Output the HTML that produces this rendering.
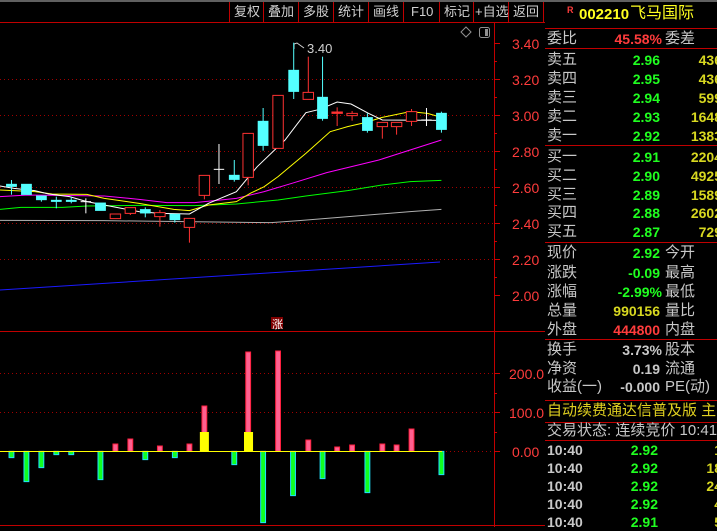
<!DOCTYPE html>
<html><head><meta charset="utf-8"><style>
*{margin:0;padding:0;box-sizing:border-box}
body{width:717px;height:527px;background:#000;overflow:hidden;position:relative;font-family:"Liberation Sans","Noto Sans CJK SC",sans-serif;}
.t{position:absolute;white-space:nowrap;font-size:15px;line-height:18px;color:#c8c8c8}
.v{position:absolute;white-space:nowrap;font-size:14px;line-height:18px;font-weight:bold;text-align:right}
.g{color:#20ff20}.y{color:#d8d820}.r{color:#ff3c3c}.w{color:#c8c8c8}
.hl{position:absolute;left:545px;width:172px;height:1px;background:#c00000}
.tb{position:absolute;top:3px;font-size:13px;color:#d0d0d0;line-height:18px}
.sep{position:absolute;top:2px;width:1px;height:20px;background:#c00000}
</style></head><body>
<div style="position:absolute;left:0;top:0;width:717px;height:2px;background:#606060"></div>
<div style="position:absolute;left:0;top:22px;width:545px;height:1px;background:#c00000"></div>
<div class="sep" style="left:229px"></div><div class="sep" style="left:263px"></div><div class="sep" style="left:298px"></div><div class="sep" style="left:333px"></div><div class="sep" style="left:368px"></div><div class="sep" style="left:403px"></div><div class="sep" style="left:439px"></div><div class="sep" style="left:473px"></div><div class="sep" style="left:508px"></div><div class="sep" style="left:543px"></div>
<div class="tb" style="left:234px">复权</div><div class="tb" style="left:268px">叠加</div><div class="tb" style="left:303px">多股</div><div class="tb" style="left:338px">统计</div><div class="tb" style="left:373px">画线</div><div class="tb" style="left:411px">F10</div><div class="tb" style="left:444px">标记</div><div class="tb" style="left:475px">+自选</div><div class="tb" style="left:513px">返回</div>

<svg width="545" height="527" style="position:absolute;left:0;top:0">
<line x1="494.5" y1="23" x2="494.5" y2="527" stroke="#c00000"/>
<line x1="545.5" y1="0" x2="545.5" y2="527" stroke="#c00000"/>
<line x1="0" y1="331.5" x2="545" y2="331.5" stroke="#c00000"/>
<line x1="0" y1="525.5" x2="545" y2="525.5" stroke="#c00000"/>
<g stroke="#a00000" stroke-dasharray="1,3">
<line x1="0" y1="79.5" x2="494" y2="79.5"/><line x1="0" y1="115.5" x2="494" y2="115.5"/><line x1="0" y1="151.5" x2="494" y2="151.5"/><line x1="0" y1="187.5" x2="494" y2="187.5"/><line x1="0" y1="223.5" x2="494" y2="223.5"/><line x1="0" y1="259.5" x2="494" y2="259.5"/>
<line x1="0" y1="373.5" x2="494" y2="373.5"/><line x1="0" y1="412.5" x2="494" y2="412.5"/><line x1="442" y1="451.5" x2="494" y2="451.5"/>
</g>
<g stroke="#d00000">
<line x1="494" y1="43.5" x2="500" y2="43.5"/><line x1="494" y1="61.5" x2="497" y2="61.5"/><line x1="494" y1="79.5" x2="500" y2="79.5"/><line x1="494" y1="97.5" x2="497" y2="97.5"/><line x1="494" y1="115.5" x2="500" y2="115.5"/><line x1="494" y1="133.5" x2="497" y2="133.5"/><line x1="494" y1="151.5" x2="500" y2="151.5"/><line x1="494" y1="169.5" x2="497" y2="169.5"/><line x1="494" y1="187.5" x2="500" y2="187.5"/><line x1="494" y1="205.5" x2="497" y2="205.5"/><line x1="494" y1="223.5" x2="500" y2="223.5"/><line x1="494" y1="241.5" x2="497" y2="241.5"/><line x1="494" y1="259.5" x2="500" y2="259.5"/><line x1="494" y1="277.5" x2="497" y2="277.5"/><line x1="494" y1="295.5" x2="500" y2="295.5"/>
<line x1="494" y1="373.5" x2="500" y2="373.5"/><line x1="494" y1="393.5" x2="497" y2="393.5"/><line x1="494" y1="412.5" x2="500" y2="412.5"/><line x1="494" y1="432.5" x2="497" y2="432.5"/><line x1="494" y1="451.5" x2="500" y2="451.5"/>
</g>
<g fill="#ff3c3c" font-size="14" font-family="Liberation Sans,sans-serif">
<text x="512" y="49">3.40</text><text x="512" y="85">3.20</text><text x="512" y="121">3.00</text><text x="512" y="157">2.80</text><text x="512" y="193">2.60</text><text x="512" y="229">2.40</text><text x="512" y="265">2.20</text><text x="512" y="301">2.00</text>
<text x="509" y="379">200.0</text><text x="509" y="418">100.0</text><text x="512" y="457">0.00</text>
</g>
<path d="M466 27 L471 32 L466 37 L461 32 Z" fill="none" stroke="#909090"/>
<rect x="479.5" y="27.5" width="10" height="10" rx="2" fill="none" stroke="#909090"/><rect x="485" y="29" width="3" height="7" fill="#909090"/>
<text x="307" y="53" fill="#d0d0d0" font-size="13" font-family="Liberation Sans,sans-serif">3.40</text>
<path d="M294 44 L294 49 M294 44 L297 43 L304 48" stroke="#d0d0d0" fill="none"/>
<rect x="271" y="317" width="12" height="12" fill="#800000"/><text x="272" y="328" fill="#fff" font-size="11" font-family="Noto Sans CJK SC,sans-serif">涨</text>
<line x1="0" y1="290" x2="440" y2="262" stroke="#1a1aff"/>

<g transform="translate(0,30) scale(0.34758,0.33333)">
<g fill="none" stroke-width="1" vector-effect="non-scaling-stroke">
<polyline vector-effect="non-scaling-stroke" stroke="#b0b0b0" points="0,571 300,572 780,578 860,572 940,565 1060,555 1180,545 1270,538"/>
<polyline vector-effect="non-scaling-stroke" stroke="#00ff00" points="0,538 60,532 180,532 250,528 400,526 560,527 680,522 800,510 880,498 1000,482 1100,465 1180,455 1270,451"/>
<polyline vector-effect="non-scaling-stroke" stroke="#ff00ff" points="0,500 80,495 300,498 400,508 480,518 560,518 680,505 760,485 840,460 940,428 1090,390 1180,360 1270,330"/>
<polyline vector-effect="non-scaling-stroke" stroke="#ffff00" points="0,480 100,485 150,492 250,493 300,505 400,520 500,538 545,542 600,525 680,515 720,490 760,470 800,440 880,370 950,305 1000,290 1050,278 1100,262 1180,245 1230,250 1270,262"/>
<polyline vector-effect="non-scaling-stroke" stroke="#ffffff" points="0,468 40,475 100,482 140,492 200,500 250,515 300,525 350,535 400,545 460,550 545,552 600,520 680,485 740,410 820,330 880,248 920,238 970,216 1010,222 1060,250 1100,270 1270,271"/>
</g>
<g stroke="#54ffff" fill="#54ffff">
<line x1="33" y1="450" x2="33" y2="494" vector-effect="non-scaling-stroke"/><rect x="18" y="462" width="30" height="8"/>
<rect x="61" y="462" width="30" height="32"/>
<line x1="119" y1="497" x2="119" y2="515" vector-effect="non-scaling-stroke"/><rect x="104" y="497" width="30" height="13"/>
<line x1="162" y1="500" x2="162" y2="535" vector-effect="non-scaling-stroke"/><rect x="147" y="510" width="30" height="5"/>
<line x1="205" y1="500" x2="205" y2="520" vector-effect="non-scaling-stroke"/><rect x="190" y="510" width="30" height="5"/>
<rect x="274" y="518" width="30" height="24"/>
<line x1="418" y1="532" x2="418" y2="562" vector-effect="non-scaling-stroke"/><rect x="403" y="538" width="30" height="12"/>
<line x1="503" y1="552" x2="503" y2="578" vector-effect="non-scaling-stroke"/><rect x="488" y="552" width="30" height="18"/>
<line x1="674" y1="390" x2="674" y2="455" vector-effect="non-scaling-stroke"/><rect x="659" y="435" width="30" height="14"/>
<line x1="757" y1="234" x2="757" y2="362" vector-effect="non-scaling-stroke"/><rect x="742" y="273" width="30" height="74"/>
<line x1="845" y1="38" x2="845" y2="207" vector-effect="non-scaling-stroke"/><rect x="830" y="120" width="30" height="65"/>
<line x1="928" y1="80" x2="928" y2="272" vector-effect="non-scaling-stroke"/><rect x="913" y="201" width="30" height="65"/>
<line x1="1057" y1="250" x2="1057" y2="308" vector-effect="non-scaling-stroke"/><rect x="1042" y="262" width="30" height="40"/>
<line x1="1270" y1="245" x2="1270" y2="308" vector-effect="non-scaling-stroke"/><rect x="1255" y="249" width="30" height="50"/>
</g>
<g stroke="#ffffff" vector-effect="non-scaling-stroke">
<line x1="247" y1="505" x2="247" y2="550" vector-effect="non-scaling-stroke"/><line x1="232" y1="515" x2="262" y2="515" vector-effect="non-scaling-stroke"/>
<line x1="630" y1="342" x2="630" y2="462" vector-effect="non-scaling-stroke"/><line x1="615" y1="418" x2="645" y2="418" vector-effect="non-scaling-stroke"/>
<line x1="1227" y1="234" x2="1227" y2="288" vector-effect="non-scaling-stroke"/><line x1="1212" y1="270" x2="1242" y2="270" vector-effect="non-scaling-stroke"/>
</g>
<g stroke="#ff3232" fill="#000">
<rect x="317" y="552" width="30" height="14" vector-effect="non-scaling-stroke"/>
<line x1="375" y1="550" x2="375" y2="555" vector-effect="non-scaling-stroke"/><rect x="360" y="533" width="30" height="17" vector-effect="non-scaling-stroke"/>
<line x1="460" y1="540" x2="460" y2="590" vector-effect="non-scaling-stroke"/><rect x="445" y="548" width="30" height="12" vector-effect="non-scaling-stroke"/>
<line x1="545" y1="592" x2="545" y2="638" vector-effect="non-scaling-stroke"/><rect x="530" y="565" width="30" height="27" vector-effect="non-scaling-stroke"/>
<line x1="588" y1="496" x2="588" y2="508" vector-effect="non-scaling-stroke"/><rect x="573" y="436" width="30" height="60" vector-effect="non-scaling-stroke"/>
<line x1="714" y1="442" x2="714" y2="466" vector-effect="non-scaling-stroke"/><rect x="699" y="310" width="30" height="132" vector-effect="non-scaling-stroke"/>
<rect x="785" y="196" width="30" height="159" vector-effect="non-scaling-stroke"/>
<line x1="887" y1="80" x2="887" y2="187" vector-effect="non-scaling-stroke"/><rect x="872" y="187" width="30" height="21" vector-effect="non-scaling-stroke"/>
<line x1="970" y1="232" x2="970" y2="288" vector-effect="non-scaling-stroke"/><rect x="955" y="246" width="30" height="4" fill="#ff3232" vector-effect="non-scaling-stroke"/>
<line x1="1013" y1="243" x2="1013" y2="272" vector-effect="non-scaling-stroke"/><rect x="998" y="250" width="30" height="7" vector-effect="non-scaling-stroke"/>
<line x1="1100" y1="290" x2="1100" y2="326" vector-effect="non-scaling-stroke"/><rect x="1085" y="277" width="30" height="13" vector-effect="non-scaling-stroke"/>
<line x1="1141" y1="290" x2="1141" y2="314" vector-effect="non-scaling-stroke"/><rect x="1126" y="277" width="30" height="13" vector-effect="non-scaling-stroke"/>
<line x1="1184" y1="237" x2="1184" y2="288" vector-effect="non-scaling-stroke"/><rect x="1169" y="245" width="30" height="29" vector-effect="non-scaling-stroke"/>
</g>
</g>

<g transform="translate(0,330) scale(0.34758,0.33333)">
<g fill="#10ff20" stroke="#20e0ff">
<rect x="26" y="364" width="14" height="19" vector-effect="non-scaling-stroke"/><rect x="69" y="364" width="14" height="91" vector-effect="non-scaling-stroke"/><rect x="112" y="364" width="14" height="49" vector-effect="non-scaling-stroke"/><rect x="155" y="364" width="14" height="10" vector-effect="non-scaling-stroke"/><rect x="198" y="364" width="14" height="10" vector-effect="non-scaling-stroke"/><rect x="282" y="364" width="14" height="85" vector-effect="non-scaling-stroke"/><rect x="411" y="364" width="14" height="25" vector-effect="non-scaling-stroke"/><rect x="496" y="364" width="14" height="19" vector-effect="non-scaling-stroke"/><rect x="667" y="364" width="14" height="40" vector-effect="non-scaling-stroke"/><rect x="750" y="364" width="14" height="214" vector-effect="non-scaling-stroke"/><rect x="836" y="364" width="14" height="133" vector-effect="non-scaling-stroke"/><rect x="921" y="364" width="14" height="82" vector-effect="non-scaling-stroke"/><rect x="1050" y="364" width="14" height="124" vector-effect="non-scaling-stroke"/><rect x="1263" y="364" width="14" height="70" vector-effect="non-scaling-stroke"/>
</g>
<g fill="#ff6090" stroke="#ff2040">
<rect x="325" y="342" width="14" height="22" vector-effect="non-scaling-stroke"/><rect x="368" y="327" width="14" height="37" vector-effect="non-scaling-stroke"/><rect x="453" y="348" width="14" height="16" vector-effect="non-scaling-stroke"/><rect x="538" y="342" width="14" height="22" vector-effect="non-scaling-stroke"/><rect x="581" y="228" width="14" height="136" vector-effect="non-scaling-stroke"/><rect x="707" y="66" width="14" height="298" vector-effect="non-scaling-stroke"/><rect x="793" y="63" width="14" height="301" vector-effect="non-scaling-stroke"/><rect x="880" y="330" width="14" height="34" vector-effect="non-scaling-stroke"/><rect x="963" y="351" width="14" height="13" vector-effect="non-scaling-stroke"/><rect x="1006" y="345" width="14" height="19" vector-effect="non-scaling-stroke"/><rect x="1093" y="342" width="14" height="22" vector-effect="non-scaling-stroke"/><rect x="1134" y="345" width="14" height="19" vector-effect="non-scaling-stroke"/><rect x="1177" y="297" width="14" height="67" vector-effect="non-scaling-stroke"/>
</g>
<rect x="575" y="306" width="26" height="58" fill="#ffff00"/><rect x="702" y="306" width="26" height="58" fill="#ffff00"/>
</g>
<line x1="0" y1="451.5" x2="442" y2="451.5" stroke="#ffff00"/>
</svg>

<!-- right panel -->
<div style="position:absolute;left:567px;top:5px;color:#ff3c3c;font-size:9px;font-weight:bold">R</div>
<div style="position:absolute;left:579px;top:6px;color:#ffff20;font-size:15px;font-weight:bold;line-height:18px">002210</div>
<div style="position:absolute;left:630px;top:4px;color:#ffff20;font-size:16px;line-height:20px">飞马国际</div>
<div class="hl" style="top:28px"></div>
<div class="t" style="left:547px;top:30px">委比</div><div class="v r" style="left:580px;width:82px;top:30px">45.58%</div><div class="t" style="left:665px;top:30px">委差</div>
<div class="hl" style="top:48px"></div>
<div class="t" style="left:547px;top:51px">卖五</div><div class="v g" style="left:600px;width:60px;top:51px">2.96</div><div class="v y" style="left:660px;width:62px;top:51px">436</div>
<div class="t" style="left:547px;top:70px">卖四</div><div class="v g" style="left:600px;width:60px;top:70px">2.95</div><div class="v y" style="left:660px;width:62px;top:70px">436</div>
<div class="t" style="left:547px;top:89px">卖三</div><div class="v g" style="left:600px;width:60px;top:89px">2.94</div><div class="v y" style="left:660px;width:62px;top:89px">599</div>
<div class="t" style="left:547px;top:108px">卖二</div><div class="v g" style="left:600px;width:60px;top:108px">2.93</div><div class="v y" style="left:660px;width:62px;top:108px">1648</div>
<div class="t" style="left:547px;top:127px">卖一</div><div class="v g" style="left:600px;width:60px;top:127px">2.92</div><div class="v y" style="left:660px;width:62px;top:127px">1383</div>
<div class="hl" style="top:145px"></div>
<div class="t" style="left:547px;top:148px">买一</div><div class="v g" style="left:600px;width:60px;top:148px">2.91</div><div class="v y" style="left:660px;width:62px;top:148px">2204</div>
<div class="t" style="left:547px;top:167px">买二</div><div class="v g" style="left:600px;width:60px;top:167px">2.90</div><div class="v y" style="left:660px;width:62px;top:167px">4925</div>
<div class="t" style="left:547px;top:186px">买三</div><div class="v g" style="left:600px;width:60px;top:186px">2.89</div><div class="v y" style="left:660px;width:62px;top:186px">1589</div>
<div class="t" style="left:547px;top:204px">买四</div><div class="v g" style="left:600px;width:60px;top:204px">2.88</div><div class="v y" style="left:660px;width:62px;top:204px">2602</div>
<div class="t" style="left:547px;top:223px">买五</div><div class="v g" style="left:600px;width:60px;top:223px">2.87</div><div class="v y" style="left:660px;width:62px;top:223px">729</div>
<div class="hl" style="top:242px"></div>
<div class="t" style="left:547px;top:244px">现价</div><div class="v g" style="left:600px;width:60px;top:244px">2.92</div><div class="t" style="left:665px;top:244px">今开</div>
<div class="t" style="left:547px;top:264px">涨跌</div><div class="v g" style="left:590px;width:70px;top:264px">-0.09</div><div class="t" style="left:665px;top:264px">最高</div>
<div class="t" style="left:547px;top:283px">涨幅</div><div class="v g" style="left:580px;width:82px;top:283px">-2.99%</div><div class="t" style="left:665px;top:283px">最低</div>
<div class="t" style="left:547px;top:302px">总量</div><div class="v y" style="left:590px;width:70px;top:302px">990156</div><div class="t" style="left:665px;top:302px">量比</div>
<div class="t" style="left:547px;top:321px">外盘</div><div class="v r" style="left:590px;width:70px;top:321px">444800</div><div class="t" style="left:665px;top:321px">内盘</div>
<div class="hl" style="top:339px"></div>
<div class="t" style="left:547px;top:341px">换手</div><div class="v w" style="left:580px;width:82px;top:341px">3.73%</div><div class="t" style="left:665px;top:341px">股本</div>
<div class="t" style="left:547px;top:360px">净资</div><div class="v w" style="left:590px;width:70px;top:360px">0.19</div><div class="t" style="left:665px;top:360px">流通</div>
<div class="t" style="left:547px;top:378px">收益(一)</div><div class="v w" style="left:590px;width:70px;top:378px">-0.000</div><div class="t" style="left:665px;top:378px">PE(动)</div>
<div class="hl" style="top:400px"></div>
<div class="t" style="left:547px;top:402px;color:#e0d020">自动续费通达信普及版 主</div>
<div class="hl" style="top:422px"></div>
<div class="t" style="left:547px;top:422px">交易状态: 连续竞价 10:41</div>
<div class="hl" style="top:440px"></div>
<div class="v w" style="left:547px;top:441px;text-align:left">10:40</div><div class="v g" style="left:600px;width:58px;top:441px">2.92</div><div class="v y" style="left:660px;width:62px;top:441px">1</div>
<div class="v w" style="left:547px;top:459px;text-align:left">10:40</div><div class="v g" style="left:600px;width:58px;top:459px">2.92</div><div class="v y" style="left:660px;width:62px;top:459px">18</div>
<div class="v w" style="left:547px;top:477px;text-align:left">10:40</div><div class="v g" style="left:600px;width:58px;top:477px">2.92</div><div class="v y" style="left:660px;width:62px;top:477px">24</div>
<div class="v w" style="left:547px;top:495px;text-align:left">10:40</div><div class="v g" style="left:600px;width:58px;top:495px">2.92</div><div class="v y" style="left:660px;width:62px;top:495px">4</div>
<div class="v w" style="left:547px;top:513px;text-align:left">10:40</div><div class="v g" style="left:600px;width:58px;top:513px">2.91</div><div class="v y" style="left:660px;width:62px;top:513px">5</div>
</body></html>
